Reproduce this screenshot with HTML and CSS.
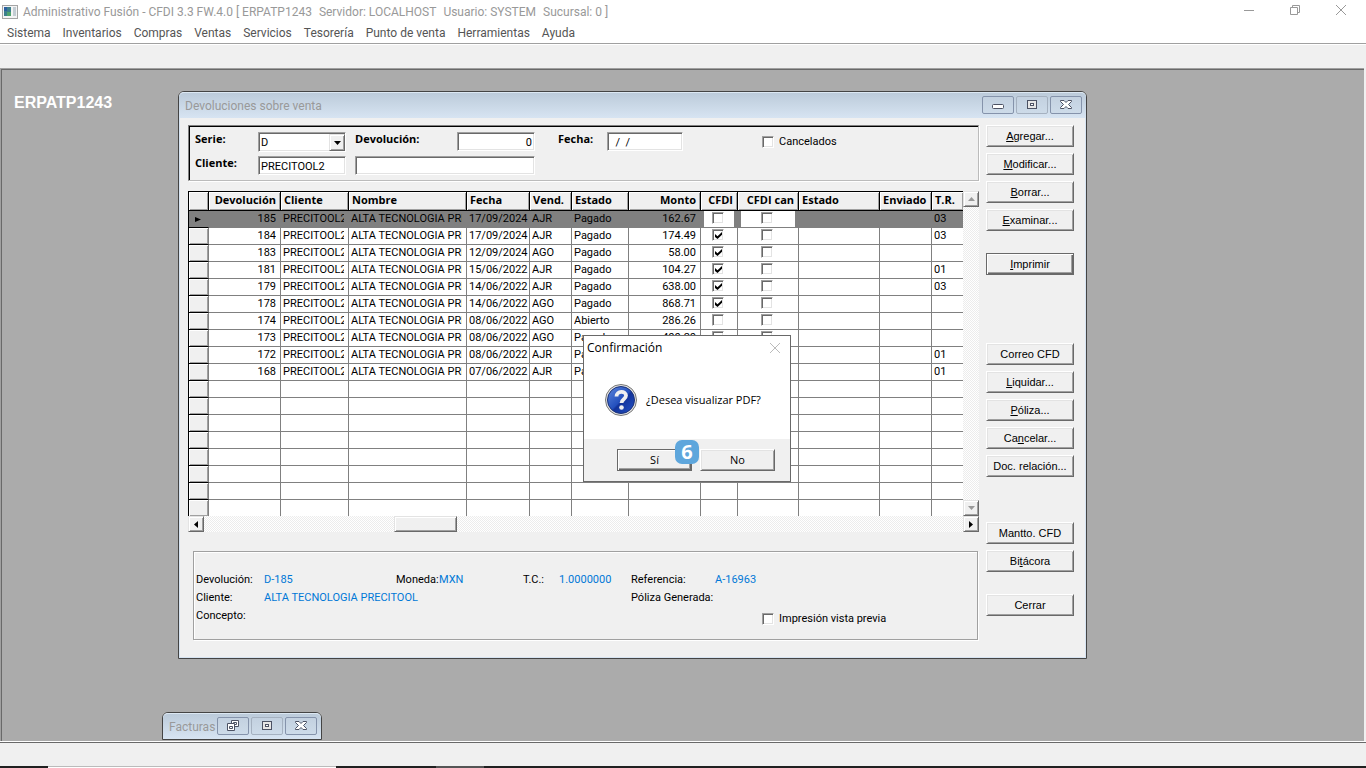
FILE: index.html
```html
<!DOCTYPE html>
<html lang="es">
<head>
  <meta charset="UTF-8">
  <title>Administrativo Fusión</title>
  <meta name="viewport" content="width=device-width, initial-scale=1.0">
  <link rel="stylesheet" href="styles.css">
</head>
<body>
  <header class="titlebar">
    <svg class="app-icon" width="16" height="14" viewBox="0 0 16 14">
      <rect x="0.5" y="0.5" width="15" height="13" fill="#f4f4f4" stroke="#a5a5a5"/>
      <rect x="2" y="2" width="7" height="9" fill="#3c7f8c"/>
      <rect x="2" y="2" width="3" height="4" fill="#2c5fa0"/>
      <rect x="5" y="7" width="4" height="4" fill="#4fa36c"/>
      <rect x="11" y="2" width="3" height="9" fill="#c3cdd3"/>
    </svg>
    <div class="app-title">
      <span>Administrativo Fusión - CFDI 3.3 FW.4.0 [ ERPATP1243</span>
      <span>Servidor: LOCALHOST</span>
      <span>Usuario: SYSTEM</span>
      <span>Sucursal: 0 ]</span>
    </div>
    <div class="app-controls">
      <button aria-label="Minimizar"><svg width="12" height="12"><path d="M1 6.5h10" stroke="#999"/></svg></button>
      <button aria-label="Restaurar"><svg width="12" height="12"><path d="M1.5 3.5h7v7h-7zM3.5 3.5v-2h7v7h-2" fill="none" stroke="#999"/></svg></button>
      <button aria-label="Cerrar"><svg width="12" height="12"><path d="M1 1l10 10M11 1L1 11" stroke="#999"/></svg></button>
    </div>
  </header>

  <nav class="menu">
    <a href="#">Sistema</a>
    <a href="#">Inventarios</a>
    <a href="#">Compras</a>
    <a href="#">Ventas</a>
    <a href="#">Servicios</a>
    <a href="#">Tesorería</a>
    <a href="#">Punto de venta</a>
    <a href="#">Herramientas</a>
    <a href="#">Ayuda</a>
  </nav>
  <div class="toolbar"></div>

  <main class="desktop">
    <h1>ERPATP1243</h1>

    <!-- Devoluciones -->
    <section class="window returns">
      <div class="window-bar">
        <h2>Devoluciones sobre venta</h2>
        <div class="window-controls">
          <button aria-label="Minimizar"><svg width="14" height="14"><rect x="1.5" y="6.5" width="11" height="4" rx="1" fill="#fff" stroke="#4c5264"/></svg></button>
          <button aria-label="Maximizar" class="dim"><svg width="14" height="14"><rect x="2.5" y="2.5" width="9" height="8" fill="#e6e6e6" stroke="#4c5264"/><rect x="5.5" y="5.5" width="3" height="2" fill="#fff" stroke="#4c5264"/></svg></button>
          <button aria-label="Cerrar"><svg width="14" height="14"><path d="M1.500 2.500h3.500l2 2 2-2h3.500v1l-3 3 3 3v1h-3.500l-2-2-2 2h-3.500v-1l3-3-3-3z" fill="#fff" stroke="#4c5264"/></svg></button>
        </div>
      </div>

      <div class="window-body">
        <div class="content">
          <form class="filters">
            <label for="serie">Serie:</label>
            <div class="combo">
              <select id="serie"><option>D</option></select>
              <span class="combo-arrow"><svg width="7" height="4"><path d="M0 0h7L3.500 4z"/></svg></span>
            </div>
            <label for="devolucion">Devolución:</label>
            <input type="text" id="devolucion" class="number" value="0">
            <label for="fecha">Fecha:</label>
            <input type="text" id="fecha" class="date" value="  /  /">
            <label class="check"><input type="checkbox"> Cancelados</label>
            <label for="cliente">Cliente:</label>
            <input type="text" id="cliente" class="client" value="PRECITOOL2">
            <input type="text" class="client-name" aria-label="Nombre del cliente">
          </form>

          <div class="grid-box">
            <div class="grid-view">
              <table>
                <colgroup>
                  <col class="c-mark"><col class="c-dev"><col class="c-cli"><col class="c-nom"><col class="c-fec"><col class="c-ven"><col class="c-est"><col class="c-mon"><col class="c-cfdi"><col class="c-can"><col class="c-est2"><col class="c-env"><col>
                </colgroup>
                <thead>
                  <tr>
                    <th></th><th class="right">Devolución</th><th>Cliente</th><th>Nombre</th><th>Fecha</th><th>Vend.</th><th>Estado</th><th class="right">Monto</th><th class="right">CFDI</th><th class="right">CFDI can</th><th>Estado</th><th>Enviado</th><th>T.R.</th>
                  </tr>
                </thead>
                <tbody id="rows"></tbody>
              </table>
            </div>
            <div class="scroll-v">
              <button class="scroll-btn" aria-label="Arriba"><svg width="7" height="4"><path d="M0 4h7L3.500 0z" fill="#999"/></svg></button>
              <button class="scroll-btn" aria-label="Abajo"><svg width="7" height="4"><path d="M0 0h7L3.500 4z" fill="#999"/></svg></button>
            </div>
            <div class="scroll-h">
              <button class="scroll-btn" aria-label="Izquierda"><svg width="4" height="7"><path d="M4 0v7L0 3.500z"/></svg></button>
              <div class="thumb"></div>
              <button class="scroll-btn" aria-label="Derecha"><svg width="4" height="7"><path d="M0 0v7L4 3.500z"/></svg></button>
            </div>
          </div>

          <div class="summary">
            <span>Devolución:</span><b>D-185</b>
            <span>Moneda:</span><b>MXN</b>
            <span>T.C.:</span><b>1.0000000</b>
            <span>Referencia:</span><b class="ref">A-16963</b>
            <span class="first">Cliente:</span><b class="name">ALTA TECNOLOGIA PRECITOOL</b>
            <span class="policy">Póliza Generada:</span>
            <span class="first">Concepto:</span>
            <label class="check preview"><input type="checkbox"> Impresión vista previa</label>
          </div>
        </div>

        <div class="actions">
          <div class="group">
            <button><u>A</u>gregar...</button>
            <button><u>M</u>odificar...</button>
            <button><u>B</u>orrar...</button>
            <button><u>E</u>xaminar...</button>
          </div>
          <div class="group print">
            <button class="default"><u>I</u>mprimir</button>
          </div>
          <div class="group docs">
            <button>Correo CFD</button>
            <button><u>L</u>iquidar...</button>
            <button><u>P</u>óliza...</button>
            <button>Ca<u>n</u>celar...</button>
            <button>Doc. relación...</button>
          </div>
          <div class="group">
            <button>Mantto. CFD</button>
            <button>Bi<u>t</u>ácora</button>
          </div>
          <div class="group">
            <button>Cerrar</button>
          </div>
        </div>
      </div>
    </section>

    <!-- Facturas minimizada -->
    <section class="window invoices">
      <div class="window-bar">
        <h2>Facturas</h2>
        <div class="window-controls">
          <button aria-label="Restaurar"><svg width="14" height="14"><path d="M5.500 1.500h7v6h-7z" fill="#fff" stroke="#4c5264"/><path d="M7.500 3.500h3v2h-3z" fill="none" stroke="#4c5264"/><path d="M1.500 4.500h7v7h-7z" fill="#fff" stroke="#4c5264"/><path d="M3.500 7.500h3v2h-3z" fill="none" stroke="#4c5264"/></svg></button>
          <button aria-label="Maximizar" class="dim"><svg width="14" height="14"><rect x="2.500" y="2.500" width="9" height="8" fill="#e6e6e6" stroke="#4c5264"/><rect x="5.500" y="5.500" width="3" height="2" fill="#fff" stroke="#4c5264"/></svg></button>
          <button aria-label="Cerrar"><svg width="14" height="14"><path d="M1.500 2.500h3.500l2 2 2-2h3.500v1l-3 3 3 3v1h-3.500l-2-2-2 2h-3.500v-1l3-3-3-3z" fill="#fff" stroke="#4c5264"/></svg></button>
        </div>
      </div>
    </section>

    <!-- Confirmación -->
    <section class="dialog" role="dialog" aria-labelledby="dialogTitle">
      <div class="dialog-bar">
        <h2 id="dialogTitle">Confirmación</h2>
        <button aria-label="Cerrar"><svg width="12" height="12"><path d="M1 1l10 10M11 1L1 11" stroke="#bbb"/></svg></button>
      </div>
      <div class="dialog-text">
        <svg width="32" height="32" viewBox="0 0 32 32">
          <defs>
            <linearGradient id="blue" x1="0" y1="0" x2="1" y2="1">
              <stop offset="0" stop-color="#5d86dc"/>
              <stop offset="0.5" stop-color="#2450bd"/>
              <stop offset="0.55" stop-color="#12339a"/>
              <stop offset="1" stop-color="#2452c8"/>
            </linearGradient>
          </defs>
          <circle cx="16" cy="16" r="15.500" fill="#e3e3e3" stroke="#777"/>
          <circle cx="16" cy="16" r="13.500" fill="url(#blue)" stroke="#1b3278"/>
          <path d="M11.500 12.500c0-6 9.500-6 9.500-1 0 4-4.500 3.500-4.500 7.500" fill="none" stroke="#f0f0f0" stroke-width="3.800"/>
          <circle cx="16.500" cy="23.500" r="2.300" fill="#f0f0f0"/>
        </svg>
        <p>¿Desea visualizar PDF?</p>
      </div>
      <div class="dialog-buttons">
        <button class="default">Sí</button>
        <button>No</button>
        <span class="step">6</span>
      </div>
    </section>
  </main>

  <footer class="statusbar"></footer>
  <div class="taskbar"><span class="search"></span><span class="task"></span></div>

  <script>
    const data = [
      ["185", "17/09/2024", "AJR", "Pagado", "162.67", false, "03"],
      ["184", "17/09/2024", "AJR", "Pagado", "174.49", true, "03"],
      ["183", "12/09/2024", "AGO", "Pagado", "58.00", true, ""],
      ["181", "15/06/2022", "AJR", "Pagado", "104.27", true, "01"],
      ["179", "14/06/2022", "AJR", "Pagado", "638.00", true, "03"],
      ["178", "14/06/2022", "AGO", "Pagado", "868.71", true, ""],
      ["174", "08/06/2022", "AGO", "Abierto", "286.26", false, ""],
      ["173", "08/06/2022", "AGO", "Pagado", "400.20", false, ""],
      ["172", "08/06/2022", "AJR", "Pagado", "", false, "01"],
      ["168", "07/06/2022", "AJR", "Pagado", "", false, "01"]
    ];
    const totalRows = 18;
    const rows = document.getElementById("rows");

    function cell(text, cls) {
      return `<td class="${cls || ""}"><span>${text}</span></td>`;
    }

    function box(checked, name) {
      return `<td class="box"><span><input type="checkbox" aria-label="${name}" ${checked ? "checked" : ""}></span></td>`;
    }

    for (let i = 0; i < totalRows; i++) {
      const tr = document.createElement("tr");
      const d = data[i];
      if (i === 0) tr.className = "selected";
      if (d) {
        tr.innerHTML = `<td class="mark">${i === 0 ? '<svg width="6" height="5"><path d="M0 0v5L6 2.500z"/></svg>' : ""}</td>`
          + cell(d[0], "right") + cell("PRECITOOL2") + cell("ALTA TECNOLOGIA PRECITOOL")
          + cell(d[1], "day") + cell(d[2]) + cell(d[3]) + cell(d[4], "right")
          + box(d[5], "CFDI") + box(false, "CFDI can") + cell("") + cell("") + cell(d[6]);
      } else {
        tr.innerHTML = '<td class="mark"></td>' + "<td></td>".repeat(12);
      }
      rows.appendChild(tr);
    }
  </script>
</body>
</html>
```
FILE: styles.css
```css
:root {
  --face: #f0f0f0;
  --line: #808080;
  --shadow: #696969;
  --desktop: #ababab;
  --value: #0078d7;
  --ui: "Open Sans", "Noto Sans", sans-serif;
  --title: Roboto, "Open Sans", sans-serif;
}

* {
  box-sizing: border-box;
}

body {
  margin: 0;
  min-height: 100vh;
  display: flex;
  flex-direction: column;
  background: var(--face);
  color: #000;
  font-family: var(--ui);
  font-size: 11px;
  line-height: 14px;
}

h1, h2, p {
  margin: 0;
}

button, input, select {
  font: inherit;
  color: inherit;
  margin: 0;
  padding: 0;
}

/* ventana principal */
.titlebar {
  display: flex;
  align-items: center;
  height: 23px;
  padding-left: 2px;
  background: #fff;
  color: #999;
  font: 12px/14px var(--title);
}

.app-icon {
  margin-right: 5px;
}

.app-title {
  display: flex;
  flex: 1;
  gap: 7px;
  white-space: nowrap;
}

.app-controls {
  display: flex;
  margin-right: 2px;
}

.app-controls button {
  width: 46px;
  height: 22px;
  border: none;
  background: none;
}

.menu {
  display: flex;
  gap: 12px;
  height: 20px;
  padding: 3px 7px 0;
  background: #fff;
  font: 12px/14px var(--title);
}

.menu a {
  color: #555;
  text-decoration: none;
}

.toolbar {
  height: 25px;
  border-top: 1px solid #a0a0a0;
  box-shadow: inset 0 1px #fff;
}

.desktop {
  position: relative;
  flex: 1;
  margin-right: 2px;
  background: var(--desktop);
  border: 1px solid #a0a0a0;
  border-width: 1px 0 0 1px;
  box-shadow: inset 1px 1px var(--shadow);
}

.desktop h1 {
  padding: 26px 13px;
  color: #fff;
  font: bold 16px/16px "Liberation Sans", sans-serif;
}

.statusbar {
  height: 25px;
  border-top: 1px solid #fff;
  box-shadow: inset 0 1px var(--shadow);
}

.taskbar {
  display: flex;
  height: 2px;
  background: #202020;
}

.search {
  width: 288px;
  margin-left: 48px;
  background: #fff;
  border-top: 1px solid #bbb;
}

.task {
  width: 48px;
  margin-left: 100px;
  background: #555;
}

/* ventanas */
.window {
  position: absolute;
  border: 1px solid #444;
  border-radius: 6px 6px 0 0;
  background: var(--face);
  box-shadow: inset 0 0 0 1px #d7e4f2;
}

.returns {
  left: 177px;
  top: 22px;
  width: 909px;
}

.invoices {
  left: 161px;
  bottom: 1px;
  width: 160px;
}

.window-bar {
  display: flex;
  align-items: center;
  justify-content: space-between;
  height: 26px;
  padding: 0 4px 1px 6px;
  border-radius: 5px 5px 0 0;
  border-top: 1px solid #dce8f3;
  background: linear-gradient(#bccbda, #d7e4f2);
}

.window-bar h2 {
  padding-top: 2px;
  color: #999;
  font: 12px/14px var(--title);
}

.window-controls {
  display: flex;
  gap: 2px;
}

.window-controls button {
  display: flex;
  align-items: center;
  justify-content: center;
  width: 32px;
  height: 18px;
  border: 1px solid #8593ab;
  border-radius: 2px;
  background: linear-gradient(#c3d1e0, #cddbe9);
}

.window-controls .dim {
  border-color: #a5b1c0;
}

.window-body {
  display: flex;
  justify-content: space-between;
  gap: 7px;
  padding: 7px 12px 18px 9px;
}

.content {
  flex: 1;
  min-width: 0;
}

/* controles */
input[type="text"], select {
  height: 19px;
  border: 1px solid;
  border-color: #a0a0a0 #fff #fff #a0a0a0;
  border-radius: 0;
  box-shadow: inset 1px 1px var(--shadow), inset -1px -1px #e3e3e3;
  background: #fff;
  padding: 1px 2px 0;
  font-family: var(--title);
  appearance: none;
}

input[type="checkbox"] {
  appearance: none;
  width: 12px;
  height: 12px;
  border: 1px solid;
  border-color: #a0a0a0 #fff #fff #a0a0a0;
  box-shadow: inset 1px 1px var(--shadow), inset -1px -1px #e3e3e3;
  background: #fff;
}

input[type="checkbox"]:checked::before {
  content: "";
  display: block;
  width: 7px;
  height: 7px;
  margin: 2px;
  background: #000;
  clip-path: polygon(0 29%, 36% 62%, 100% 0, 100% 40%, 36% 100%, 0 70%);
}

.check {
  display: flex;
  align-items: center;
  gap: 5px;
  font-family: var(--title);
}

.filters {
  display: grid;
  grid-template-columns: 63px 97px 102px 101px 49px 155px auto;
  grid-template-rows: 24px 24px;
  align-items: start;
  height: 56px;
  padding: 6px 6px 0;
  border: 1px solid;
  border-color: var(--line) #bbb #bbb var(--line);
  box-shadow: inset 1px 1px #000, 1px 1px #fff;
}

.filters > label:not(.check) {
  font-weight: bold;
}

.filters .check {
  height: 19px;
}

.combo {
  position: relative;
  width: 88px;
}

.combo select {
  width: 100%;
  height: 20px;
  display: block;
}

.combo-arrow {
  position: absolute;
  top: 2px;
  right: 1px;
  width: 16px;
  height: 17px;
  display: flex;
  align-items: center;
  justify-content: center;
  background: var(--face);
  border: 1px solid;
  border-color: #e3e3e3 var(--shadow) var(--shadow) #e3e3e3;
  box-shadow: inset 1px 1px #fff, inset -1px -1px #a0a0a0;
  pointer-events: none;
}

.number {
  width: 78px;
  text-align: right;
}

.date {
  width: 76px;
  white-space: pre;
}

.client {
  width: 88px;
}

.client-name {
  grid-column: span 2;
  width: 180px;
}

/* cuadrícula */
.grid-box {
  display: grid;
  grid-template-columns: 1fr 16px;
  grid-template-rows: 325px 16px;
  margin-top: 10px;
}

.grid-view {
  overflow: hidden;
  background: #fff;
  border-top: 1px solid #000;
  border-left: 1px solid #000;
}

table {
  width: 100%;
  table-layout: fixed;
  border-collapse: separate;
  border-spacing: 0;
}

.c-mark { width: 20px; }
.c-dev { width: 72px; }
.c-cli { width: 68px; }
.c-nom { width: 118px; }
.c-fec { width: 63px; }
.c-ven { width: 42px; }
.c-est { width: 57px; }
.c-mon { width: 72px; }
.c-cfdi { width: 37px; }
.c-can { width: 61px; }
.c-est2 { width: 81px; }
.c-env { width: 52px; }

th {
  height: 19px;
  padding: 0 2px 2px 3px;
  text-align: left;
  white-space: nowrap;
  background: var(--face);
  border-right: 1px solid #000;
  border-bottom: 1px solid #000;
  box-shadow: inset 1px 1px #fff, inset -1px -1px #a0a0a0;
}

th.right {
  padding-right: 4px;
}

td {
  height: 17px;
  padding: 0 4px 0 2px;
  border-right: 1px solid var(--line);
  border-bottom: 1px solid var(--line);
  font-family: var(--title);
}

td span {
  display: block;
  height: 16px;
  line-height: 15px;
  overflow: hidden;
  white-space: nowrap;
}

th:last-child, td:last-child {
  border-right: none;
}

.right {
  text-align: right;
}

.day {
  padding-right: 0;
}

.mark {
  padding: 0 0 0 6px;
  line-height: 5px;
  background: var(--face);
  border-bottom-color: #000;
  box-shadow: inset 1px 1px #fff, inset -1px -1px #a0a0a0;
}

.box {
  padding: 0 3px;
}

.box span {
  display: flex;
  align-items: center;
  justify-content: center;
  padding: 0 2px 2px 0;
}

.selected td {
  background: var(--line);
}

.selected .mark {
  box-shadow: none;
}

.selected .box span {
  background: #fff;
}

.scroll-v, .scroll-h {
  display: flex;
  justify-content: space-between;
  background: repeating-conic-gradient(#fff 0 25%, #ececec 0 50%) 0 0 / 2px 2px;
}

.scroll-v {
  flex-direction: column;
}

.scroll-h {
  grid-column: 1 / -1;
}

.scroll-btn, .thumb {
  display: flex;
  align-items: center;
  justify-content: center;
  width: 16px;
  height: 16px;
  background: var(--face);
  border: 1px solid;
  border-color: #e3e3e3 var(--shadow) var(--shadow) #e3e3e3;
  box-shadow: inset 1px 1px #fff, inset -1px -1px #a0a0a0;
}

.thumb {
  width: 63px;
  margin-right: 316px;
}

/* resumen */
.summary {
  display: grid;
  grid-template-columns: 68px 132px 43px 84px 36px 72px 84px 47px auto;
  grid-auto-rows: 18px;
  align-content: start;
  align-items: center;
  height: 89px;
  margin: 19px 1px 0 5px;
  padding: 19px 2px 0;
  border: 1px solid #a0a0a0;
  box-shadow: inset 1px 1px #fff, 1px 1px #fff;
  font-family: var(--title);
  white-space: nowrap;
}

.summary b {
  color: var(--value);
  font-weight: normal;
}

.first {
  grid-column: 1;
}

.summary b.ref {
  grid-column: span 2;
}

.summary b.name {
  grid-column: 2 / 7;
}

.policy {
  grid-column: 7 / 10;
}

.preview {
  grid-column: 9;
  padding-top: 6px;
}

/* botones */
.actions {
  display: flex;
  flex-direction: column;
  gap: 22px;
  width: 88px;
}

.group {
  display: flex;
  flex-direction: column;
  gap: 6px;
}

.print {
  margin-bottom: 46px;
}

.docs {
  margin-bottom: 23px;
}

.actions button, .dialog-buttons button {
  height: 22px;
  background: var(--face);
  border: 1px solid;
  border-color: #fff var(--shadow) var(--shadow) #fff;
  box-shadow: inset 1px 1px #e3e3e3, inset -1px -1px #a0a0a0;
}

.actions button {
  font: 11px/14px "Liberation Sans", sans-serif;
}

.actions .default, .dialog-buttons .default {
  border-color: var(--shadow);
  box-shadow: inset 1px 1px #fff, inset -1px -1px var(--shadow), inset -2px -2px #a0a0a0;
}

/* diálogo */
.dialog {
  position: absolute;
  left: 582px;
  top: 266px;
  width: 208px;
  background: #fff;
  border: 1px solid var(--shadow);
}

.dialog-bar {
  display: flex;
  align-items: center;
  justify-content: space-between;
  height: 26px;
  padding: 0 9px 2px 3px;
}

.dialog-bar h2 {
  font-size: 12px;
  font-weight: normal;
}

.dialog-bar button {
  display: flex;
  border: none;
  background: none;
}

.dialog-text {
  display: flex;
  align-items: center;
  gap: 9px;
  height: 77px;
  padding: 0 0 1px 21px;
  white-space: nowrap;
}

.dialog-buttons {
  position: relative;
  display: flex;
  justify-content: flex-end;
  gap: 8px;
  padding: 10px 15px;
  background: var(--face);
}

.dialog-buttons button {
  width: 75px;
}

.step {
  position: absolute;
  left: 91px;
  top: 1px;
  width: 24px;
  height: 24px;
  border-radius: 7px;
  background: #5ea6dc;
  color: #fff;
  font: bold 20px/24px "Open Sans", sans-serif;
  text-align: center;
}
```
